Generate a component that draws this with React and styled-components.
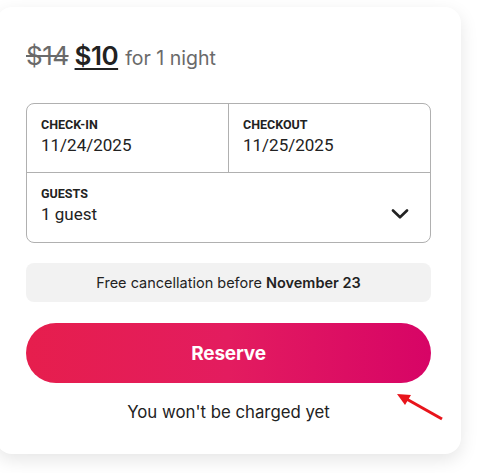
import React from "react";
import styled, { createGlobalStyle } from "styled-components";

const GlobalStyle = createGlobalStyle`
  body {
    margin: 0;
    background: #ffffff;
    font-family: "Inter", "Noto Sans", sans-serif;
    color: #222222;
  }
`;

const Page = styled.div`
  padding-top: 7px;
  height: 473px;
  box-sizing: border-box;
  overflow: hidden;
`;

const Card = styled.section`
  position: relative;
  margin-left: -4px;
  width: 465px;
  box-sizing: border-box;
  padding: 33px 30px 0 30px;
  height: 447px;
  background: #ffffff;
  border-radius: 16px;
  box-shadow: 0 6px 18px rgba(0, 0, 0, 0.1);
`;

const PriceRow = styled.div`
  display: flex;
  align-items: baseline;
  gap: 6px;
  line-height: 32px;
  height: 32px;
`;

const OldPrice = styled.span`
  font-size: 26px;
  color: #6a6a6a;
  text-decoration: line-through;
  letter-spacing: -0.5px;
`;

const NewPrice = styled.span`
  font-size: 26px;
  font-weight: 600;
  color: #222222;
  text-decoration: underline;
  text-decoration-thickness: 2px;
  text-underline-offset: 3px;
  letter-spacing: -0.5px;
`;

const Per = styled.span`
  font-size: 19.5px;
  color: #6a6a6a;
  margin-left: 1px;
`;

const DateBox = styled.div`
  margin-top: 31px;
  border: 1px solid #b0b0b0;
  border-radius: 8px;
  display: grid;
  grid-template-columns: 202px 1fr;
  font-family: "Roboto", "Liberation Sans", sans-serif;
`;

const Cell = styled.div`
  height: 69px;
  box-sizing: border-box;
  padding: 13px 14px 0 14px;
  border-right: ${(p) => (p.$divider ? "1px solid #b0b0b0" : "none")};
  border-bottom: ${(p) => (p.$bottom ? "1px solid #b0b0b0" : "none")};
  grid-column: ${(p) => (p.$wide ? "1 / span 2" : "auto")};
  display: flex;
  align-items: flex-start;
  justify-content: space-between;
`;

const Label = styled.div`
  font-size: 12.5px;
  font-weight: 700;
  line-height: 16px;
  color: #222222;
`;

const Value = styled.div`
  font-size: 17px;
  line-height: 22px;
  margin-top: 1px;
  color: #222222;
`;

const Chevron = styled.svg`
  margin-top: 23px;
  margin-right: 7px;
`;

const Notice = styled.div`
  margin-top: 20px;
  height: 39px;
  border-radius: 8px;
  background: #f2f2f2;
  display: flex;
  align-items: center;
  justify-content: center;
  font-size: 14.5px;
  color: #222222;

  b {
    font-weight: 600;
    margin-left: 4px;
  }
`;

const ReserveButton = styled.button`
  margin-top: 21px;
  width: 100%;
  height: 60px;
  border: none;
  border-radius: 30px;
  background: linear-gradient(to right, #e61e4d 0%, #e31c5f 50%, #d70466 100%);
  color: #ffffff;
  font-family: "Inter", "Noto Sans", sans-serif;
  font-size: 19px;
  font-weight: 700;
  letter-spacing: -0.2px;
  cursor: pointer;
`;

const Note = styled.p`
  margin: 17px 0 0 0;
  text-align: center;
  font-size: 16.8px;
  line-height: 24px;
  color: #222222;
`;

const Pointer = styled.svg`
  position: absolute;
  left: 397px;
  top: 383px;
`;

export default function App() {
  return (
    <Page>
      <GlobalStyle />
      <Card>
        <PriceRow>
          <OldPrice>$14</OldPrice>
          <NewPrice>$10</NewPrice>
          <Per>for 1 night</Per>
        </PriceRow>

        <DateBox>
          <Cell $divider $bottom>
            <div>
              <Label>CHECK-IN</Label>
              <Value>11/24/2025</Value>
            </div>
          </Cell>
          <Cell $bottom>
            <div>
              <Label>CHECKOUT</Label>
              <Value>11/25/2025</Value>
            </div>
          </Cell>
          <Cell $wide>
            <div>
              <Label>GUESTS</Label>
              <Value>1 guest</Value>
            </div>
            <Chevron width="18" height="10" viewBox="0 0 18 10" fill="none">
              <path
                d="M2 1.5 L9 8.3 L16 1.5"
                stroke="#222222"
                strokeWidth="2.6"
                strokeLinecap="round"
                strokeLinejoin="round"
              />
            </Chevron>
          </Cell>
        </DateBox>

        <Notice>
          Free cancellation before <b>November 23</b>
        </Notice>

        <ReserveButton>Reserve</ReserveButton>

        <Note>You won't be charged yet</Note>

        <Pointer width="52" height="32" viewBox="0 0 52 32">
          <line x1="49" y1="29" x2="10" y2="7" stroke="#e8141b" strokeWidth="3" />
          <polygon points="4,4 18,5 12,15" fill="#e8141b" />
        </Pointer>
      </Card>
    </Page>
  );
}
